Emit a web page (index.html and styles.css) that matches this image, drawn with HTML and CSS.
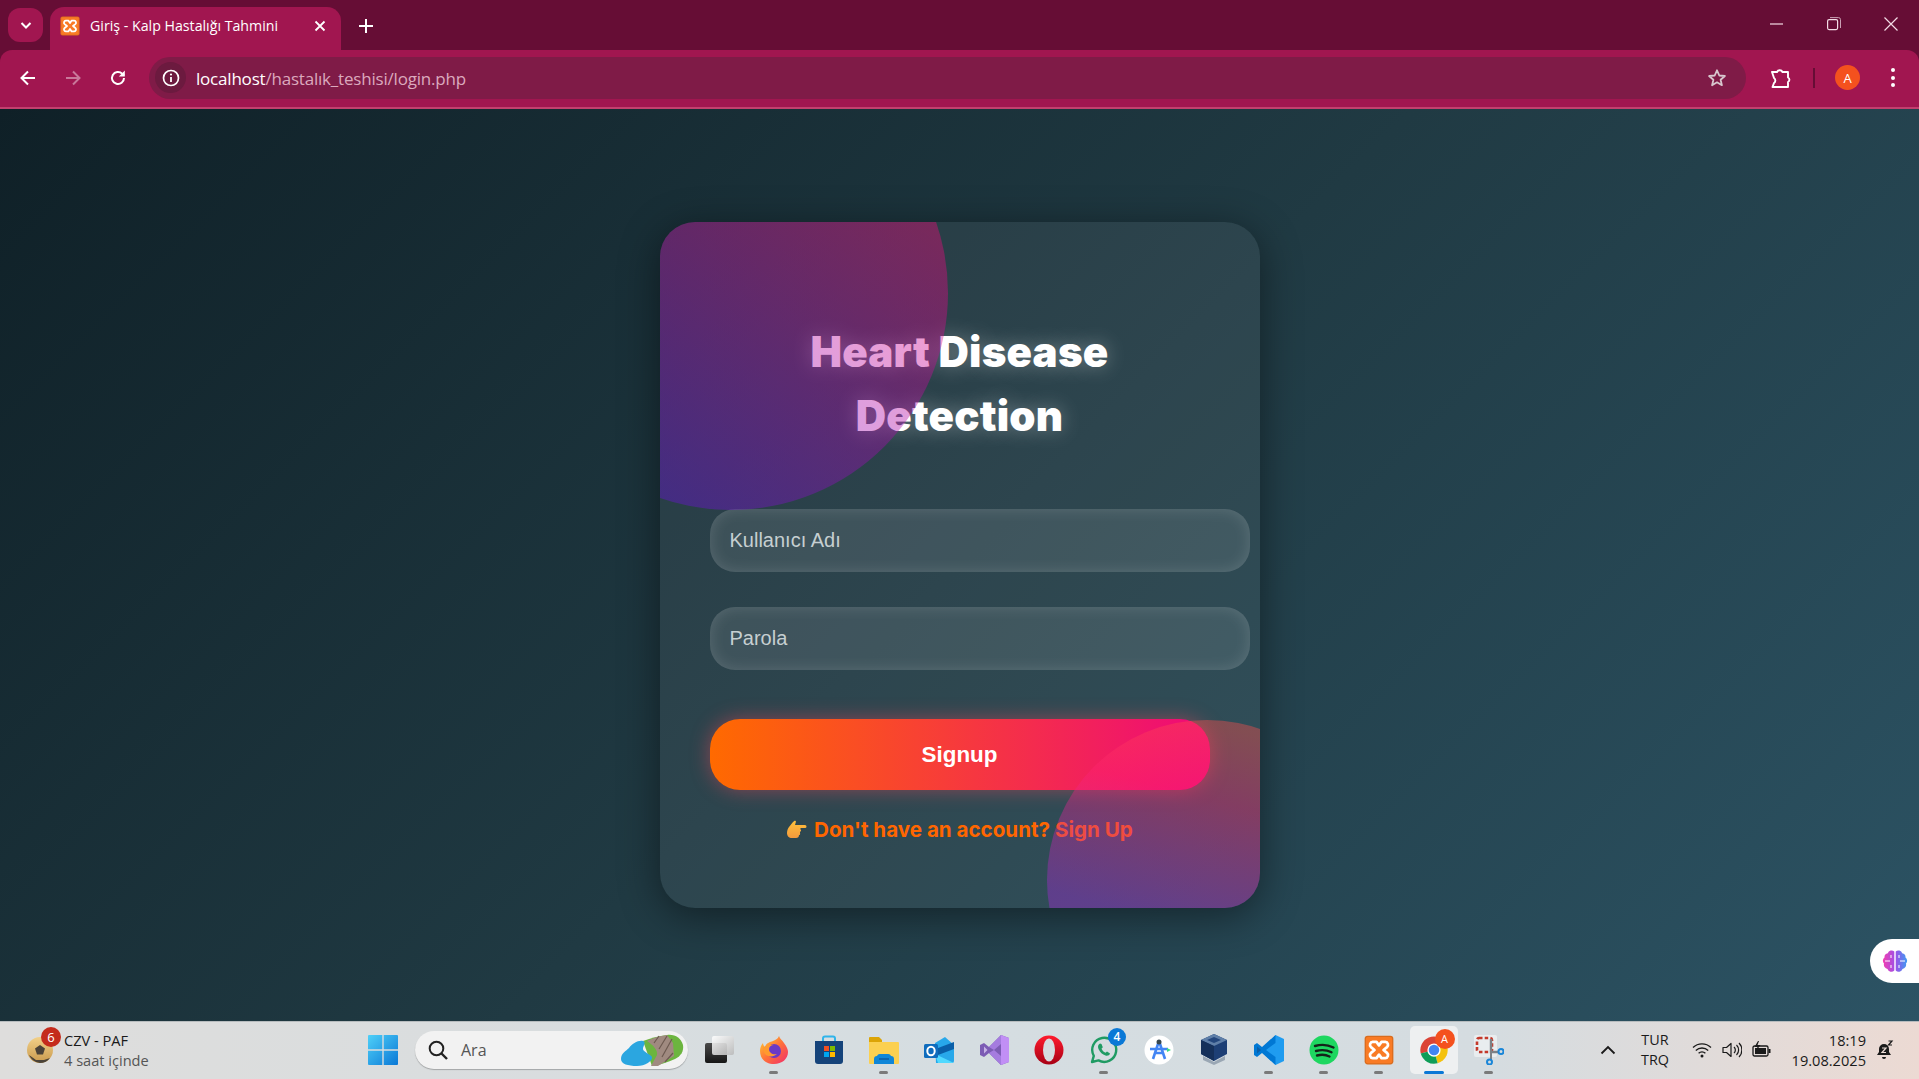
FILE: index.html
```html
<!DOCTYPE html>
<html lang="tr">
<head>
  <meta charset="UTF-8">
  <meta name="viewport" content="width=device-width, initial-scale=1.0">
  <title>Giriş - Kalp Hastalığı Tahmini</title>
  <link rel="stylesheet" href="styles.css">
</head>
<body>

  <svg class="defs" width="0" height="0">
    <defs>
      <symbol id="xampp" viewBox="0 0 24 24">
        <rect x="0.5" y="0.5" width="23" height="23" rx="2.5" fill="#d96c1e"/>
        <rect x="1.5" y="1.5" width="21" height="21" rx="1.5" fill="#f97b25"/>
        <path d="M7 5.5h3l2 2.8 2-2.8h3a2.4 2.4 0 0 1 1.4 4.2L15.6 12l2.8 2.3A2.4 2.4 0 0 1 17 18.5h-3l-2-2.8-2 2.8H7a2.4 2.4 0 0 1-1.4-4.2L8.4 12 5.6 9.7A2.4 2.4 0 0 1 7 5.5z" fill="none" stroke="#fff" stroke-width="2.2" stroke-linejoin="round"/>
      </symbol>
    </defs>
  </svg>

  <!-- browser chrome -->
  <div class="tab-strip">
    <button class="tab-search">
      <svg width="14" height="14" viewBox="0 0 14 14"><path d="M2.5 5L7 9.5 11.5 5" fill="none" stroke="#fff" stroke-width="2"/></svg>
    </button>
    <div class="tab">
      <svg class="favicon" width="20" height="20"><use href="#xampp"/></svg>
      <span class="tab-title">Giriş - Kalp Hastalığı Tahmini</span>
      <svg width="12" height="12" viewBox="0 0 12 12"><path d="M1.5 1.5l9 9M10.5 1.5l-9 9" stroke="#fff" stroke-width="1.8"/></svg>
    </div>
    <svg class="new-tab" width="14" height="14" viewBox="0 0 14 14"><path d="M7 0v14M0 7h14" stroke="#fff" stroke-width="2"/></svg>
    <div class="window-controls">
      <svg width="14" height="14" viewBox="0 0 14 14"><path d="M0 7h13" stroke="#f3dbe5" stroke-width="1.2"/></svg>
      <svg width="14" height="14" viewBox="0 0 14 14"><rect x="0.6" y="2.6" width="10" height="10" rx="1.5" fill="none" stroke="#f3dbe5" stroke-width="1.2"/><path d="M3 .6h8.5a2 2 0 0 1 2 2V11" fill="none" stroke="#c9a0b3"/></svg>
      <svg width="14" height="14" viewBox="0 0 14 14"><path d="M.5.5l13 13M13.5.5l-13 13" stroke="#f3dbe5" stroke-width="1.2"/></svg>
    </div>
  </div>

  <div class="toolbar">
    <svg class="nav-icon" width="18" height="18" viewBox="0 0 18 18"><path d="M16 9H3M9 2.5L2.5 9 9 15.5" fill="none" stroke="#fff" stroke-width="2"/></svg>
    <svg class="nav-icon" width="18" height="18" viewBox="0 0 18 18"><path d="M2 9h13M9 2.5L15.5 9 9 15.5" fill="none" stroke="#c9789a" stroke-width="2"/></svg>
    <svg class="nav-icon" width="18" height="18" viewBox="0 0 18 18"><path d="M15 9a6 6 0 1 1-1.8-4.3L15 6.5" fill="none" stroke="#fff" stroke-width="2"/><path d="M15.8 1.5v6h-6z" fill="#fff"/></svg>
    <div class="omnibox">
      <span class="site-info">
        <svg width="18" height="18" viewBox="0 0 18 18"><circle cx="9" cy="9" r="7.5" fill="none" stroke="#fff" stroke-width="1.7"/><path d="M9 8v5" stroke="#fff" stroke-width="1.8"/><circle cx="9" cy="5.5" r="1.1" fill="#fff"/></svg>
      </span>
      <span class="url"><span class="url-host">localhost</span>/hastalık_teshisi/login.php</span>
      <svg class="star" width="20" height="20" viewBox="0 0 20 20"><path d="M10 2.3l2.3 5.2 5.6.5-4.3 3.7 1.3 5.5-4.9-2.9-4.9 2.9 1.3-5.5L2.1 8l5.6-.5z" fill="none" stroke="#d8c7ce" stroke-width="1.8" stroke-linejoin="round"/></svg>
    </div>
    <svg class="puzzle" width="22" height="22" viewBox="0 0 22 22"><path d="M3 5h5a3 3 0 0 1 5.5 0H19v5.5a2.5 2.5 0 0 1 0 4.500v5H3.5l1.500-4a3 3 0 0 0 0-5L3 5z" fill="none" stroke="#fff" stroke-width="1.9" stroke-linejoin="round"/></svg>
    <span class="toolbar-sep"></span>
    <span class="avatar">A</span>
    <span class="kebab"><i></i><i></i><i></i></span>
  </div>

  <!-- the page -->
  <main class="page">
    <section class="login-card">
      <h1 class="card-title">Heart Disease<br>Detection</h1>
      <form class="login-form">
        <input class="field" type="text" placeholder="Kullanıcı Adı">
        <input class="field" type="password" placeholder="Parola">
        <button class="submit-btn" type="button">Signup</button>
      </form>
      <p class="signup-hint">
        <svg class="hand" width="22" height="22" viewBox="0 0 22 22">
          <defs><linearGradient id="handFill" x1="0" y1="0" x2="0" y2="1"><stop offset="0" stop-color="#ffc23c"/><stop offset="1" stop-color="#f59a3c"/></linearGradient></defs>
          <path d="M3 8l4-5 2-1.5 1 1-1 3.5h10a1.5 1.5 0 0 1 0 3h-4.5v1.5a1.2 1.2 0 0 1-.5 2.2v1.5a1.2 1.2 0 0 1-1 1.8c0 2-1 3-3 3H6c-3 0-5-2-5-5 0-2 .8-4.500 2-6z" fill="url(#handFill)"/>
        </svg>
        Don't have an account? <a class="signup-link" href="#">Sign Up</a>
      </p>
      <span class="blob blob-top"></span>
      <span class="blob blob-bottom"></span>
    </section>

    <div class="side-pill">
      <svg width="26" height="26" viewBox="0 0 26 26">
        <defs><linearGradient id="brainFill" x1="0" y1="0" x2="1" y2="0"><stop offset="0" stop-color="#f23fb0"/><stop offset=".5" stop-color="#a04fe6"/><stop offset="1" stop-color="#3f9bf2"/></linearGradient></defs>
        <path d="M12.3 3.5a4 4 0 0 0-6.500 1.800A4 4 0 0 0 2.500 9.500a4 4 0 0 0-.5 6 4.500 4.500 0 0 0 3.500 5.500 4 4 0 0 0 6.800 1.500zM13.700 3.500a4 4 0 0 1 6.500 1.800 4 4 0 0 1 3.300 4.200 4 4 0 0 1 .5 6 4.500 4.500 0 0 1-3.500 5.500 4 4 0 0 1-6.800 1.500z" fill="url(#brainFill)"/>
        <path d="M3 13h5M9 7v3M9 17v3M23 13h-5M17 7v3M17 17v3" stroke="#fff" stroke-width="1"/>
      </svg>
    </div>
  </main>

  <!-- windows taskbar -->
  <footer class="taskbar">
    <div class="weather">
      <span class="weather-icon">
        <svg width="28" height="28" viewBox="0 0 28 28">
          <defs><linearGradient id="ballFill" x1="0" y1="0" x2="0" y2="1"><stop offset="0" stop-color="#f2d088"/><stop offset="1" stop-color="#c99a4e"/></linearGradient></defs>
          <circle cx="14" cy="14" r="13" fill="url(#ballFill)"/>
          <path d="M14 9l5 3.500-2 6h-6l-2-6z" fill="#4a4238"/>
          <path d="M3 19c2 4 5 7 11 8 4 0 8-2 10-5l-6 2h-8z" fill="#4a4238"/>
        </svg>
        <span class="weather-badge">6</span>
      </span>
      <span class="weather-text">
        <span class="weather-title">CZV - PAF</span>
        <span class="weather-sub">4 saat içinde</span>
      </span>
    </div>

    <svg class="win-logo" width="30" height="30" viewBox="0 0 30 30">
      <defs><linearGradient id="winFill" x1="0" y1="0" x2="1" y2="1"><stop offset="0" stop-color="#4fd0f8"/><stop offset="1" stop-color="#0a78d6"/></linearGradient></defs>
      <path d="M0 1a1 1 0 0 1 1-1h13.300v14.300H0zM15.700 0H29a1 1 0 0 1 1 1v13.300H15.700zM0 15.700h14.300V30H1a1 1 0 0 1-1-1zM15.700 15.700H30V29a1 1 0 0 1-1 1H15.700z" fill="url(#winFill)"/>
    </svg>

    <div class="search-box">
      <svg width="22" height="22" viewBox="0 0 22 22"><circle cx="9.5" cy="9.5" r="6.8" fill="none" stroke="#222" stroke-width="2"/><path d="M14.5 14.5l5.5 5.5" stroke="#222" stroke-width="2.4"/></svg>
      <span class="search-label">Ara</span>
      <svg class="search-art" width="64" height="36" viewBox="0 0 64 36">
        <path d="M22 9c8-3 16-5 24-6 8-1 14 3 16 10 1 6-2 11-8 14-7 3-15 6-23 7z" fill="#6cb53f"/>
        <path d="M26 9c6-3 12-5 20-6l6 8 1 13-16 10-7 0 6-11c1-5-4-10-10-14z" fill="#a08a80"/>
        <path d="M33 11l5-7M38 17l8-13M41 25l10-18M44 30l8-9" stroke="#6d5a50" stroke-width="1.2"/>
        <path d="M0 27c0-6 5-8 8-11 3-4 9-8 14-7 3 1 1 4 0 7-1 4 8 6 9 9 1 4-7 9-15 9-9 0-16-2-16-7z" fill="#2ba6e0"/>
      </svg>
    </div>

    <div class="app-list">
      <span class="app">
        <svg width="30" height="30" viewBox="0 0 30 30">
          <defs><linearGradient id="tvBack" x1="0" y1="0" x2="0" y2="1"><stop offset="0" stop-color="#4a4a4a"/><stop offset="1" stop-color="#161616"/></linearGradient><linearGradient id="tvFront" x1="0" y1="0" x2="1" y2="1"><stop offset="0" stop-color="#fff"/><stop offset="1" stop-color="#b9b9b9"/></linearGradient></defs>
          <rect x="1" y="8" width="22" height="20" rx="2" fill="url(#tvBack)"/>
          <rect x="8" y="1" width="22" height="19" rx="2" fill="url(#tvFront)" opacity=".9"/>
        </svg>
      </span>
      <span class="app is-running">
        <svg width="30" height="30" viewBox="0 0 30 30">
          <defs><linearGradient id="ffFill" x1="0" y1="0" x2="1" y2="1"><stop offset="0" stop-color="#ffd02e"/><stop offset=".5" stop-color="#ff7139"/><stop offset="1" stop-color="#f02b6e"/></linearGradient></defs>
          <path d="M20 1c1 3 3 4 5 7 3 4 4 7 4 9 0 7-6 12-14 12S1 24 1 16c0-3 1-6 3-8 0 2 1 3 2 4 1-4 5-5 8-6 2-1 5-2 6-5z" fill="url(#ffFill)"/>
          <circle cx="15" cy="16" r="7" fill="#6b39c4"/>
          <path d="M4 13c3-3 6-4 11-3-3 0-5 2-5 4 0 4 4 6 8 5-3 3-8 3-11 1-2-2-3-4-3-7z" fill="#ff9a2e"/>
        </svg>
      </span>
      <span class="app">
        <svg width="30" height="30" viewBox="0 0 30 30">
          <path d="M9 7V3.5a2 2 0 0 1 2-2h8a2 2 0 0 1 2 2V7" fill="none" stroke="#2fb4ea" stroke-width="2"/>
          <path d="M1 6h28v20a3 3 0 0 1-3 3H4a3 3 0 0 1-3-3z" fill="#15437a"/>
          <rect x="10" y="11" width="5" height="5" fill="#f25022"/><rect x="16" y="11" width="5" height="5" fill="#7fba00"/><rect x="10" y="17" width="5" height="5" fill="#00a4ef"/><rect x="16" y="17" width="5" height="5" fill="#ffb900"/>
        </svg>
      </span>
      <span class="app is-running">
        <svg width="30" height="30" viewBox="0 0 30 30">
          <path d="M0 3a1 1 0 0 1 1-1h9l3 3v5H0z" fill="#dca406"/>
          <path d="M0 7h29a1 1 0 0 1 1 1v20a1 1 0 0 1-1 1H1a1 1 0 0 1-1-1z" fill="#fbd051"/>
          <path d="M5 29v-5a3 3 0 0 1 3-3 3 3 0 0 1 3-2h8a3 3 0 0 1 3 2 3 3 0 0 1 3 3v5z" fill="#0f86d8"/>
          <path d="M10 24h10" stroke="#0b5ea6" stroke-width="1.6"/>
        </svg>
      </span>
      <span class="app">
        <svg width="30" height="30" viewBox="0 0 30 30">
          <path d="M11 8l10-6 9 8v16a2 2 0 0 1-2 2H12z" fill="#28a8ea"/>
          <path d="M14 13l16-6v7l-16 6z" fill="#0a5fa8"/>
          <path d="M11 19l19 9H14z" fill="#50d9ff"/>
          <rect x="0" y="9" width="14" height="14" rx="1.5" fill="#0f6cbd"/>
          <ellipse cx="7" cy="16" rx="3.7" ry="4.2" fill="none" stroke="#fff" stroke-width="2"/>
        </svg>
      </span>
      <span class="app">
        <svg width="30" height="30" viewBox="0 0 30 30">
          <path d="M22 0l8 3v24l-8 3-12-12-5 4-4-2V10l4-2 5 4z" fill="#7c5cb4"/>
          <path d="M22 0l8 3v24l-8 3z" fill="#c18ff5"/>
          <path d="M10 12L22 0v9l-7 6 7 6v9L10 18l5-3z" fill="#a57cdf"/>
          <path d="M5 11.5v7L8.5 15z" fill="#c7b3e6"/>
        </svg>
      </span>
      <span class="app">
        <svg width="30" height="30" viewBox="0 0 30 30">
          <defs><linearGradient id="opFill" x1="0" y1="0" x2="0" y2="1"><stop offset="0" stop-color="#ff1b2d"/><stop offset="1" stop-color="#a70014"/></linearGradient></defs>
          <circle cx="15" cy="15" r="14.5" fill="url(#opFill)"/>
          <ellipse cx="15" cy="15" rx="6" ry="11.5" fill="#d5dce0"/>
        </svg>
      </span>
      <span class="app is-running">
        <svg width="30" height="30" viewBox="0 0 30 30">
          <path d="M3 27l1.8-6.200A12 12 0 1 1 9.500 25.400z" fill="none" stroke="#1f9b63" stroke-width="2.4" stroke-linejoin="round"/>
          <path d="M11 8.500c-2 1-2.500 3-1.500 5.500 1.500 3.500 4 5.500 7 6.500 2 .5 4 0 4.500-2l-3-2-1.500 1.300c-2-1-3-2-4-4l1.300-1.500-1.300-3.300z" fill="#1f9b63"/>
        </svg>
        <span class="app-badge">4</span>
      </span>
      <span class="app">
        <svg width="30" height="30" viewBox="0 0 30 30">
          <circle cx="15" cy="15" r="14.5" fill="#fff"/>
          <path d="M15 6L9 24M15 6l6 18M6 14h18M11 18h8" fill="none" stroke="#4285f4" stroke-width="2.6"/>
          <circle cx="15" cy="7" r="2.5" fill="#37474f"/>
          <path d="M23 13l4 2-4 2z" fill="#3ddc84"/>
        </svg>
      </span>
      <span class="app">
        <svg width="30" height="32" viewBox="0 0 30 32">
          <path d="M15 0l13 6v14l-13 7L2 20V6z" fill="#1d3f75"/>
          <path d="M15 0l13 6-13 6L2 6z" fill="#5f7fa8"/>
          <path d="M15 12v15L2 20V6z" fill="#15305a"/>
          <path d="M15 3l7 3-7 3-7-3z" fill="#24477d"/>
          <path d="M4 22l11 6 11-6v4l-11 5-11-5z" fill="#9aa7b4"/>
        </svg>
      </span>
      <span class="app is-running">
        <svg width="30" height="30" viewBox="0 0 30 30">
          <path d="M21.5 0L30 4v22l-8.500 4L8 17z" fill="#1f9cf0"/>
          <path d="M21.5 0v8L12 15l9.500 7v8L8 18l-5 4-3-2V10l3-2 5 4z" fill="#0078d4"/>
          <path d="M3 11.5v7L7 15z" fill="#0a5ea8"/>
        </svg>
      </span>
      <span class="app is-running">
        <svg width="30" height="30" viewBox="0 0 30 30">
          <circle cx="15" cy="15" r="14.5" fill="#1ed760"/>
          <path d="M6 11c6-1.800 13-1.300 18.500 1.500M7 16c5-1.400 11-1 15.500 1.300M8 20.500c4.500-1.100 9-.8 12.500 1" fill="none" stroke="#14241a" stroke-width="2.4" stroke-linecap="round"/>
        </svg>
      </span>
      <span class="app is-running"><svg width="30" height="30"><use href="#xampp"/></svg></span>
      <span class="app is-active">
        <svg width="30" height="30" viewBox="0 0 24 24">
          <path d="M12 12L1.400 14.850A11 11 0 0 1 21.500 6.500z" fill="#db4437"/>
          <path d="M12 12L21.500 6.500A11 11 0 0 1 14.850 22.600z" fill="#f4c20d"/>
          <path d="M12 12L14.850 22.600A11 11 0 0 1 1.400 14.850z" fill="#0f9d58"/>
          <circle cx="12" cy="12" r="5.3" fill="#fff"/>
          <circle cx="12" cy="12" r="4.2" fill="#4285f4"/>
        </svg>
        <span class="chrome-badge">A</span>
      </span>
      <span class="app is-running">
        <svg width="30" height="30" viewBox="0 0 30 30">
          <rect x="0" y="0" width="23" height="22" rx="2" fill="#e9edef"/>
          <rect x="3" y="3" width="15" height="14" rx="2" fill="none" stroke="#c4392b" stroke-width="2.6" stroke-dasharray="3.5 2.2"/>
          <path d="M17 4v13h8" fill="none" stroke="#7c8186" stroke-width="2.4"/>
          <path d="M17 17v8" stroke="#7c8186" stroke-width="2"/>
          <circle cx="15.5" cy="27" r="2.5" fill="none" stroke="#1a86d8" stroke-width="2"/>
          <circle cx="27" cy="16.5" r="2.5" fill="none" stroke="#1a86d8" stroke-width="2"/>
        </svg>
      </span>
    </div>

    <div class="tray">
      <svg class="tray-chevron" width="16" height="10" viewBox="0 0 16 10"><path d="M1.5 8.500L8 2l6.500 6.500" fill="none" stroke="#1a1a1a" stroke-width="1.8"/></svg>
      <span class="lang"><span>TUR</span><span>TRQ</span></span>
      <span class="tray-icons">
        <svg width="20" height="18" viewBox="0 0 20 18"><path d="M1 6.500a13 13 0 0 1 18 0M3.800 9.500a9 9 0 0 1 12.400 0M6.600 12.300a5 5 0 0 1 6.800 0" fill="none" stroke="#1a1a1a" stroke-width="1.3"/><circle cx="10" cy="15" r="1.5" fill="#1a1a1a"/></svg>
        <svg width="20" height="18" viewBox="0 0 20 18"><path d="M1 6.500h3.500L9 2.500v13l-4.500-4H1z" fill="none" stroke="#1a1a1a" stroke-width="1.2" stroke-linejoin="round"/><path d="M12 6a4 4 0 0 1 0 6M14.500 4a7 7 0 0 1 0 10M17 2a10 10 0 0 1 0 14" fill="none" stroke="#1a1a1a" stroke-width="1.2"/></svg>
        <svg width="20" height="18" viewBox="0 0 20 18"><rect x="1" y="5" width="15" height="10" rx="1.5" fill="none" stroke="#1a1a1a" stroke-width="1.3"/><rect x="3" y="7" width="11" height="6" fill="#1a1a1a"/><rect x="16.5" y="8" width="2" height="4" fill="#1a1a1a"/><path d="M6 0L2.500 6h3L4 10l4.500-6h-3L7 0z" fill="#1a1a1a"/></svg>
      </span>
      <span class="clock"><span>18:19</span><span>19.08.2025</span></span>
      <span class="bell">
        <svg width="18" height="20" viewBox="0 0 18 20"><path d="M8 4a5 5 0 0 0-5 5v3l-2 3h14l-2-3V9a5 5 0 0 0-5-5z" fill="#1a1a1a"/><path d="M6 17h4a2 2 0 0 1-4 0z" fill="#1a1a1a"/><path d="M6 8h4l-4 4.500h4" fill="none" stroke="#eadbd5" stroke-width="1.2"/><path d="M12.500 1H16l-3.500 4H16" fill="none" stroke="#1a1a1a" stroke-width="1.2"/></svg>
      </span>
    </div>
  </footer>

</body>
</html>
```

FILE: styles.css
```css
* {
  box-sizing: border-box;
}

html,
body {
  height: 100%;
}

body {
  margin: 0;
  display: flex;
  flex-direction: column;
  overflow: hidden;
  font-family: 'Open Sans', 'Noto Sans', sans-serif;
  background-color: #660d35;
}

.defs {
  position: absolute;
}

/* tab strip */
.tab-strip {
  height: 50px;
  flex: none;
  display: flex;
  align-items: flex-end;
  padding-left: 8px;
  background-color: #660d35;
}

.tab-search {
  width: 35px;
  height: 34px;
  margin-bottom: 8px;
  padding: 0;
  border: none;
  border-radius: 12px;
  background-color: #a11650;
  display: flex;
  align-items: center;
  justify-content: center;
}

.tab {
  width: 291px;
  height: 43px;
  margin-left: 7px;
  padding: 0 15px 5px 10px;
  display: flex;
  align-items: center;
  gap: 10px;
  border-radius: 14px 14px 0 0;
  background-color: #a11650;
}

.tab-title {
  flex: 1;
  margin-top: -2px;
  color: #fff;
  font-size: 14.2px;
  white-space: nowrap;
}

.new-tab {
  margin: 0 0 17px 18px;
}

.window-controls {
  margin-left: auto;
  align-self: flex-start;
  padding: 17px 21px 0 0;
  display: flex;
  gap: 43px;
}

/* toolbar */
.toolbar {
  height: 59px;
  flex: none;
  padding: 0 18px 2px 19px;
  display: flex;
  align-items: center;
  border-radius: 12px 12px 0 0;
  border-bottom: 2px solid #c2406e;
  background-color: #a11650;
}

.nav-icon {
  margin-right: 27px;
}

.nav-icon:nth-child(3) {
  margin-right: 22px;
}

.omnibox {
  width: 1597px;
  height: 42px;
  padding: 0 19px 0 6px;
  display: flex;
  align-items: center;
  border-radius: 21px;
  background-color: #7f1b47;
}

.site-info {
  width: 31px;
  height: 31px;
  display: flex;
  align-items: center;
  justify-content: center;
  border-radius: 50%;
  background-color: #6c1a3f;
}

.url {
  flex: 1;
  margin-left: 10px;
  padding-top: 2px;
  color: #dba9bd;
  font-size: 17px;
  letter-spacing: -0.2px;
}

.url-host {
  color: #fff;
}

.puzzle {
  margin-left: 23px;
}

.toolbar-sep {
  width: 2px;
  height: 20px;
  margin-left: 22px;
  background-color: #660d35;
}

.avatar {
  width: 25px;
  height: 25px;
  margin-left: 20px;
  display: flex;
  align-items: center;
  justify-content: center;
  border-radius: 50%;
  background-color: #f4511e;
  color: #fff;
  font-size: 13px;
}

.kebab {
  margin-left: 31px;
  display: flex;
  flex-direction: column;
  gap: 3.5px;
}

.kebab i {
  width: 4px;
  height: 4px;
  border-radius: 50%;
  background-color: #fff;
}

/* page */
.page {
  position: relative;
  flex: 1;
  padding-top: 113px;
  display: flex;
  justify-content: center;
  align-items: flex-start;
  background: linear-gradient(135deg, #0f2027, #203a43, #2c5364);
}

.login-card {
  position: relative;
  width: 600px;
  height: 686px;
  padding: 98px 50px 0;
  border-radius: 35px;
  overflow: hidden;
  background-color: rgba(255, 255, 255, 0.06);
  box-shadow: 0 8px 40px rgba(0, 0, 0, 0.45);
}

.card-title {
  margin: 0 0 61px;
  font-family: Inter, 'Open Sans', sans-serif;
  font-size: 42px;
  font-weight: 900;
  letter-spacing: 0.2px;
  line-height: 64px;
  text-align: center;
  color: #fff;
  text-shadow: 0 0 20px rgba(255, 255, 255, 0.35);
}

.login-form {
  display: flex;
  flex-direction: column;
  align-items: flex-start;
}

.field {
  width: 540px;
  height: 63px;
  margin-bottom: 35px;
  padding: 0 20px;
  border: none;
  border-radius: 25px;
  outline: none;
  background-color: rgba(255, 255, 255, 0.09);
  box-shadow: inset 0 0 16px rgba(255, 255, 255, 0.15);
  color: #fff;
  font-family: 'Liberation Sans', Arial, sans-serif;
  font-size: 20px;
}

.field::placeholder {
  color: #c6cfd1;
}

.submit-btn {
  width: 500px;
  height: 71px;
  margin-top: 14px;
  border: none;
  border-radius: 30px;
  background: linear-gradient(90deg, #ff6a00, #ee0979);
  box-shadow: 0 0 20px rgba(255, 70, 90, 0.45);
  color: #fff;
  font-family: 'Liberation Sans', Arial, sans-serif;
  font-size: 22.4px;
  font-weight: 700;
  cursor: pointer;
}

.signup-hint {
  margin: 27px 0 0;
  text-align: center;
  font-family: Inter, 'Open Sans', sans-serif;
  font-size: 20.6px;
  font-weight: 700;
  color: #ff6600;
}

.hand {
  vertical-align: -4px;
  margin-right: 1px;
}

.signup-link {
  color: #ff6600;
  text-decoration: none;
}

/* both circles sit over the content, tinting whatever is below */
.blob {
  position: absolute;
  border-radius: 50%;
  opacity: 0.4;
  pointer-events: none;
}

.blob-top {
  top: -146px;
  left: -146px;
  width: 434px;
  height: 434px;
  background: linear-gradient(35deg, #6a11dc 15%, #ff0770 85%);
}

.blob-bottom {
  top: 498px;
  left: 387px;
  width: 320px;
  height: 320px;
  background: linear-gradient(15deg, #a52ad9 37%, #ff2370 70%, #ff4e4b 89%);
}

.side-pill {
  position: absolute;
  top: 830px;
  right: 0;
  width: 49px;
  height: 44px;
  padding-left: 12px;
  display: flex;
  align-items: center;
  border-radius: 22px 0 0 22px;
  background-color: #fff;
}

/* taskbar */
.taskbar {
  height: 58px;
  flex: none;
  padding-bottom: 2px;
  display: flex;
  align-items: center;
  border-top: 1px solid #b7bcbe;
  background: linear-gradient(90deg, #dedddc, #d5dde1 50%, #d5dce0 78%, #ecdad3);
}

.weather {
  width: 368px;
  padding-left: 26px;
  display: flex;
  align-items: center;
  gap: 10px;
}

.weather-icon {
  position: relative;
  display: flex;
}

.weather-badge {
  position: absolute;
  top: -9px;
  right: -7px;
  width: 20px;
  height: 20px;
  border-radius: 50%;
  background-color: #c42b1c;
  color: #fff;
  font-size: 13px;
  line-height: 20px;
  text-align: center;
}

.weather-text {
  display: flex;
  flex-direction: column;
  font-size: 14.6px;
  line-height: 20px;
  color: #1a1a1a;
}

.weather-sub {
  color: #555;
}

.win-logo {
  flex: none;
}

.search-box {
  width: 273px;
  height: 38px;
  margin-left: 17px;
  padding-left: 12px;
  display: flex;
  align-items: center;
  border-radius: 19px;
  background-color: #f2f2f2;
  box-shadow: 0 1px 1px rgba(0, 0, 0, 0.25);
}

.search-label {
  flex: 1;
  margin-left: 12px;
  font-size: 16px;
  color: #555;
}

.search-art {
  margin-right: 3px;
}

.app-list {
  width: 825px;
  margin-left: 3px;
  display: flex;
}

.app {
  position: relative;
  width: 55px;
  height: 48px;
  flex: none;
  display: flex;
  align-items: center;
  justify-content: center;
}

.is-running::after,
.is-active::after {
  content: "";
  position: absolute;
  bottom: 0;
  left: 23px;
  width: 9px;
  height: 3px;
  border-radius: 2px;
  background-color: #7a7a7a;
}

.is-active {
  margin: 0 3.5px;
  width: 48px;
  border-radius: 5px;
  background-color: #eef0f1;
}

.is-active::after {
  left: 14px;
  width: 20px;
  background-color: #0a78d6;
}

.app-badge {
  position: absolute;
  top: 2px;
  right: 5px;
  width: 18px;
  height: 18px;
  border-radius: 50%;
  background-color: #0a78d6;
  color: #fff;
  font-size: 12px;
  font-weight: 600;
  line-height: 18px;
  text-align: center;
}

.chrome-badge {
  position: absolute;
  top: 3px;
  right: 3px;
  width: 20px;
  height: 20px;
  border-radius: 50%;
  background-color: #f4511e;
  color: #fff;
  font-size: 11px;
  line-height: 20px;
  text-align: center;
}

.tray {
  flex: 1;
  display: flex;
  align-items: center;
  color: #1a1a1a;
}

.tray-chevron {
  margin-left: 84px;
}

.lang {
  width: 40px;
  margin-left: 19px;
  display: flex;
  flex-direction: column;
  align-items: center;
  font-size: 14.4px;
  line-height: 20px;
}

.tray-icons {
  margin-left: 17px;
  display: flex;
  gap: 10px;
}

.clock {
  width: 84px;
  margin-left: 10px;
  display: flex;
  flex-direction: column;
  align-items: flex-end;
  font-size: 14.6px;
  line-height: 20px;
}

.bell {
  margin-left: 10px;
  display: flex;
}
```
